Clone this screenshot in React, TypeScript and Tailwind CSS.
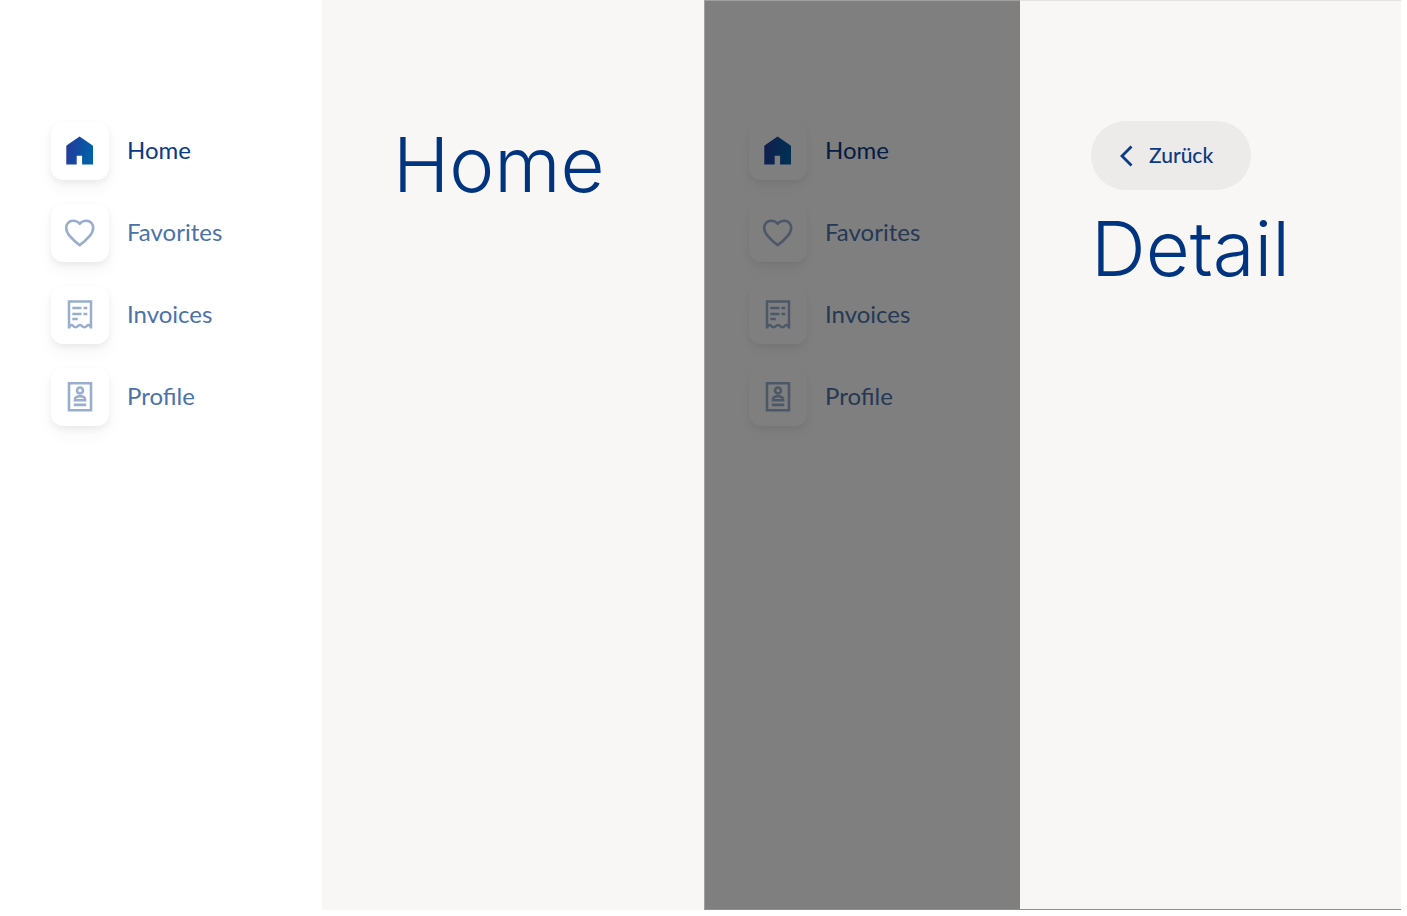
import type { ReactNode } from "react";

const HomeIcon = () => (
  <svg viewBox="0 0 36 36" className="size-9" aria-hidden="true">
    <defs>
      <linearGradient id="home-fill" x1="0" y1="0" x2="1" y2="0.2">
        <stop offset="0" stopColor="#27379b" />
        <stop offset="1" stopColor="#0060a8" />
      </linearGradient>
    </defs>
    <path
      d="M17.600 3.400 4.900 12.200Q4.300 12.700 4.300 13.600V31.400H14.700v-8.600h5.400v8.600H31V13.600q0-.9-.7-1.400Z"
      fill="url(#home-fill)"
    />
  </svg>
);

const HeartIcon = () => (
  <svg viewBox="0 0 36 36" className="size-9" fill="none" stroke="#99aece" strokeWidth="2.600" strokeLinejoin="round" aria-hidden="true">
    <path d="M17.700 8.800C16 6.600 13.500 5.800 11 5.800 7 5.800 4.200 8.800 4.200 12.700c0 3.400 1.400 5.800 3.700 8.500 2.700 3.200 6 6.400 9.800 8.900 3.800-2.500 7.100-5.700 9.800-8.900 2.300-2.700 3.700-5.100 3.700-8.500C31.200 8.800 28.400 5.800 24.400 5.800 21.900 5.800 19.400 6.600 17.700 8.800Z" />
  </svg>
);

const InvoiceIcon = () => (
  <svg viewBox="0 0 36 36" className="size-9" fill="none" stroke="#99aece" strokeWidth="2.500" aria-hidden="true">
    <path d="M7 31.500V4.500h22v27" />
    <path d="M7 30c1.500-2.400 3.300-2.400 4.400-.9 1.100 1.600 3.300 1.600 4.400 0 1.100-1.600 3.300-1.600 4.400 0 1.100 1.600 3.300 1.600 4.400 0 1.100-1.500 2.900-1.500 4.400.9" />
    <path d="M10.300 11h9.200M21.500 11h3.800M10.300 17h9.200M21.500 17h3.800M10.300 22h5.400" />
  </svg>
);

const ProfileIcon = () => (
  <svg viewBox="0 0 36 36" className="size-9" fill="none" stroke="#99aece" strokeWidth="2.600" aria-hidden="true">
    <path d="M7 4.300h22v26.900H7Z" />
    <circle cx="18" cy="11.500" r="3" />
    <path d="M12.900 21.300v-.6c0-2.200 2.300-3.500 5.100-3.500s5.100 1.300 5.100 3.500v.6ZM11.800 25.900h12.400" />
  </svg>
);

const items: { label: string; icon: ReactNode }[] = [
  { label: "Home", icon: <HomeIcon /> },
  { label: "Favorites", icon: <HeartIcon /> },
  { label: "Invoices", icon: <InvoiceIcon /> },
  { label: "Profile", icon: <ProfileIcon /> },
];

function Navigation({ label }: { label: string }) {
  return (
    <nav aria-label={label}>
      <ul className="flex flex-col gap-6">
        {items.map((item, index) => (
          <li key={item.label}>
            <a
              href={`#${item.label.toLowerCase()}`}
              className={`flex items-center gap-[18px] text-2xl ${index === 0 ? "text-[#0a3a85]" : "text-[#4a72ab]"}`}
            >
              <span className="flex size-[58px] shrink-0 items-center justify-center rounded-xl bg-white shadow-[0_3px_6px_rgba(0,0,0,0.06),0_8px_18px_rgba(0,0,0,0.04)]">
                {item.icon}
              </span>
              <span className="pb-0.5">{item.label}</span>
            </a>
          </li>
        ))}
      </ul>
    </nav>
  );
}

function Title({ children }: { children: ReactNode }) {
  return (
    <h1 className="font-['Inter','Open_Sans',sans-serif] text-[76px] leading-[88px] font-light text-[#003380]">
      {children}
    </h1>
  );
}

export default function App() {
  return (
    <div className="grid min-h-screen grid-cols-[704fr_697fr] bg-white pr-1.5 pb-1.5 font-['Lato','Liberation_Sans',sans-serif]">
      <section className="flex">
        <aside className="w-[322px] shrink-0 bg-white pt-[122px] pl-[51px]">
          <Navigation label="Main" />
        </aside>
        <main className="grow bg-[#f8f7f5] pt-[120px] pl-[71px]">
          <Title>Home</Title>
        </main>
      </section>
      <section className="flex border-b border-[#8f8f8f]">
        <aside className="relative w-[316px] shrink-0 border-t border-l border-[#a0a0a0] bg-white pt-[121px] pl-11">
          <Navigation label="Main, behind detail" />
          <div className="absolute inset-0 bg-black/50" />
        </aside>
        <div className="flex grow flex-col items-start gap-3.5 border-t border-[#e4e3e2] bg-[#f8f7f5] pt-[120px] pl-[71px]">
          <button type="button" className="flex h-[69px] w-40 items-center gap-4 rounded-full bg-[#ecebe9] pl-7 text-[21px] font-medium text-[#0a3a85]">
            <svg viewBox="0 0 14 24" className="h-6 w-3.5" fill="none" stroke="currentColor" strokeWidth="2.800" aria-hidden="true">
              <path d="M12.500 2.500 3 12l9.500 9.500" />
            </svg>
            <span className="pb-0.5">Zurück</span>
          </button>
          <Title>Detail</Title>
        </div>
      </section>
    </div>
  );
}
